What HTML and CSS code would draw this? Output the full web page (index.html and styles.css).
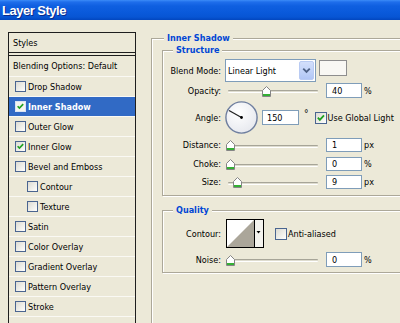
FILE: index.html
```html
<!DOCTYPE html>
<html>
<head>
<meta charset="utf-8">
<title>Layer Style</title>
<link rel="stylesheet" href="styles.css">
</head>
<body>
<div class="window">
  <div class="titlebar"><span class="title">Layer Style</span></div>
  <div class="content">
    <div class="list">
      <div class="row head">Styles</div>
      <div class="row blend">Blending Options: Default</div>
      <div class="row"><span class="cb"></span>Drop Shadow</div>
      <div class="row sel"><span class="cb"><svg viewBox="0 0 11 11" width="9" height="9"><path d="M2 5.2 L4.2 7.5 L8.8 2.6" fill="none" stroke="#21A121" stroke-width="2"/></svg></span>Inner Shadow</div>
      <div class="row"><span class="cb"></span>Outer Glow</div>
      <div class="row"><span class="cb"><svg viewBox="0 0 11 11" width="9" height="9"><path d="M2 5.2 L4.2 7.5 L8.8 2.6" fill="none" stroke="#21A121" stroke-width="2"/></svg></span>Inner Glow</div>
      <div class="row"><span class="cb"></span>Bevel and Emboss</div>
      <div class="row sub"><span class="cb"></span>Contour</div>
      <div class="row sub"><span class="cb"></span>Texture</div>
      <div class="row"><span class="cb"></span>Satin</div>
      <div class="row"><span class="cb"></span>Color Overlay</div>
      <div class="row"><span class="cb"></span>Gradient Overlay</div>
      <div class="row"><span class="cb"></span>Pattern Overlay</div>
      <div class="row"><span class="cb"></span>Stroke</div>
      <div class="row empty"></div>
    </div>

    <div class="main">
      <div class="group outer">
        <div class="legend">Inner Shadow</div>
        <div class="group structure">
          <div class="legend">Structure</div>

          <div class="frow r-blend">
            <span class="lbl">Blend Mode:</span>
            <div class="select">
              <span class="sel-text">Linear Light</span>
              <span class="sel-btn"><svg viewBox="0 0 14 17" width="14" height="17"><path d="M3.5 6.5 L7 10 L10.5 6.5" fill="none" stroke="#4D6185" stroke-width="2"/></svg></span>
            </div>
            <span class="swatch"></span>
          </div>

          <div class="frow r-opacity">
            <span class="lbl">Opacity:</span>
            <div class="slider"><span class="track"></span><span class="thumb" style="left:37px"><svg viewBox="0 0 9 11" width="9" height="11"><path d="M0.5 4.5 L4.5 0.5 L8.5 4.5 L8.5 10.5 L0.5 10.5 Z" fill="#fff" stroke="#858585"/><rect x="1" y="8" width="7" height="2" fill="#34B034"/></svg></span></div>
            <span class="num">40</span><span class="unit">%</span>
          </div>

          <div class="frow r-angle">
            <span class="lbl">Angle:</span>
            <svg class="dial" viewBox="0 0 33 33" width="33" height="33">
              <defs><radialGradient id="dg" cx="0.4" cy="0.35" r="0.7"><stop offset="0" stop-color="#ffffff"/><stop offset="1" stop-color="#E6E8EE"/></radialGradient></defs>
              <circle cx="16.5" cy="16.5" r="15.6" fill="url(#dg)" stroke="#6F7F9F" stroke-width="1.4"/>
              <line x1="16.5" y1="16.5" x2="4" y2="9.5" stroke="#222" stroke-width="1.3"/>
              <circle cx="16.5" cy="16.5" r="1.4" fill="#000"/>
            </svg>
            <span class="num angle">150</span>
            <span class="deg">°</span>
            <span class="cb big"><svg viewBox="0 0 11 11" width="10" height="10"><path d="M2 5.2 L4.2 7.5 L8.8 2.6" fill="none" stroke="#21A121" stroke-width="2"/></svg></span>
            <span class="cbl">Use Global Light</span>
          </div>

          <div class="frow r-distance">
            <span class="lbl">Distance:</span>
            <div class="slider"><span class="track"></span><span class="thumb" style="left:1px"><svg viewBox="0 0 9 11" width="9" height="11"><path d="M0.5 4.5 L4.5 0.5 L8.5 4.5 L8.5 10.5 L0.5 10.5 Z" fill="#fff" stroke="#858585"/><rect x="1" y="8" width="7" height="2" fill="#34B034"/></svg></span></div>
            <span class="num">1</span><span class="unit">px</span>
          </div>

          <div class="frow r-choke">
            <span class="lbl">Choke:</span>
            <div class="slider"><span class="track"></span><span class="thumb" style="left:1px"><svg viewBox="0 0 9 11" width="9" height="11"><path d="M0.5 4.5 L4.5 0.5 L8.5 4.5 L8.5 10.5 L0.5 10.5 Z" fill="#fff" stroke="#858585"/><rect x="1" y="8" width="7" height="2" fill="#34B034"/></svg></span></div>
            <span class="num">0</span><span class="unit">%</span>
          </div>

          <div class="frow r-size">
            <span class="lbl">Size:</span>
            <div class="slider"><span class="track"></span><span class="thumb" style="left:8px"><svg viewBox="0 0 9 11" width="9" height="11"><path d="M0.5 4.5 L4.5 0.5 L8.5 4.5 L8.5 10.5 L0.5 10.5 Z" fill="#fff" stroke="#858585"/><rect x="1" y="8" width="7" height="2" fill="#34B034"/></svg></span></div>
            <span class="num">9</span><span class="unit">px</span>
          </div>
        </div>

        <div class="group quality">
          <div class="legend">Quality</div>
          <div class="frow r-contour">
            <span class="lbl">Contour:</span>
            <svg class="contour" viewBox="0 0 38 29" width="38" height="29">
              <rect x="0.5" y="0.5" width="37" height="28" fill="#fff" stroke="#000"/>
              <polygon points="1,28 28,1 28,28" fill="#ABA69A"/>
              <rect x="28" y="1" width="9" height="27" fill="#F4F3EE"/>
              <line x1="28.5" y1="1" x2="28.5" y2="28" stroke="#000"/>
              <polygon points="30.5,12 34.5,12 32.5,14.5" fill="#000"/>
            </svg>
            <span class="cb big aa"></span>
            <span class="cbl">Anti-aliased</span>
          </div>
          <div class="frow r-noise">
            <span class="lbl">Noise:</span>
            <div class="slider"><span class="track"></span><span class="thumb" style="left:1px"><svg viewBox="0 0 9 11" width="9" height="11"><path d="M0.5 4.5 L4.5 0.5 L8.5 4.5 L8.5 10.5 L0.5 10.5 Z" fill="#fff" stroke="#858585"/><rect x="1" y="8" width="7" height="2" fill="#34B034"/></svg></span></div>
            <span class="num">0</span><span class="unit">%</span>
          </div>
        </div>
      </div>
    </div>
  </div>
</div>
</body>
</html>
```

FILE: styles.css
```css
html, body {
  margin: 0;
  padding: 0;
}
body {
  background: #ECE9D8;
  font-family: "DejaVu Sans Condensed", "DejaVu Sans", sans-serif;
  font-stretch: condensed;
  font-size: 9px;
  color: #000;
  overflow: hidden;
}
.window {
  width: 400px;
  height: 323px;
  overflow: hidden;
}
.titlebar {
  height: 20px;
  display: flex;
  align-items: center;
  padding-left: 2px;
  background: linear-gradient(to bottom, #3C8CF8 0%, #1F6EEB 10%, #0F5FE0 30%, #0A5ADB 60%, #0755D4 85%, #0246BE 100%);
}
.title {
  color: #fff;
  font-family: "Liberation Sans", sans-serif;
  font-stretch: normal;
  font-weight: bold;
  font-size: 13px;
  letter-spacing: -0.5px;
  text-shadow: 1px 1px 0 #0A2A8A;
}
.content {
  display: flex;
  align-items: flex-start;
  width: 460px;
  padding: 12px 0 0 8px;
}

/* style list */
.list {
  flex: none;
  width: 126px;
  border: 1px solid #1E1E1E;
}
.row {
  height: 19px;
  border-bottom: 1px solid #FAF9F4;
  display: flex;
  align-items: center;
  gap: 2px;
  padding-left: 6px;
  white-space: nowrap;
}
.row.head {
  padding-left: 4px;
  border-bottom: 1px solid #1E1E1E;
  margin-bottom: 2px;
}
.row.blend {
  padding-left: 4px;
  height: 20px;
  border-top: 1px solid #1E1E1E;
}
.row.sub {
  padding-left: 18px;
}
.row.sel {
  background: #316AC5;
  color: #fff;
  font-weight: bold;
}
.row.empty {
  height: 30px;
  border-bottom: 0;
}
.cb {
  flex: none;
  width: 11px;
  height: 11px;
  box-sizing: border-box;
  border: 1px solid #4A6590;
  background: linear-gradient(135deg, #DCDBD3 0%, #F4F4F0 70%, #FFFFFF 100%);
  display: flex;
  align-items: center;
  justify-content: center;
}
.row.sel .cb {
  border-color: #D8E2F4;
  background: #F4F4F0;
}
.cb.big {
  width: 12px;
  height: 12px;
}

/* right side */
.main {
  flex: none;
  width: 300px;
  margin-left: 15px;
  margin-top: 6px;
}
.group {
  border: 1px solid #ACA899;
  box-shadow: inset 1px 1px 0 #fff, 1px 1px 0 #fff;
}
.legend {
  width: max-content;
  margin-top: -6px;
  padding: 0 3px;
  height: 11px;
  line-height: 11px;
  background: #ECE9D8;
  color: #0046D5;
  font-weight: bold;
}
.outer {
  padding-left: 10px;
  height: 320px;
  border-right: 0;
}
.outer > .legend {
  margin-left: 2px;
}
.structure {
  margin-top: 6px;
  padding-bottom: 6px;
}
.structure > .legend,
.quality > .legend {
  margin-left: 10px;
}
.quality {
  margin-top: 14px;
  padding-bottom: 5px;
}
.frow {
  display: flex;
  align-items: center;
  white-space: nowrap;
}
.lbl {
  flex: none;
  width: 58px;
  margin-right: 4px;
  text-align: right;
}
.r-blend { margin-top: 3px; height: 23px; }
.r-opacity { margin-top: 1px; height: 15px; }
.r-angle { margin-top: 3px; height: 33px; }
.r-distance { margin-top: 4px; height: 14px; }
.r-choke { margin-top: 5px; height: 14px; }
.r-size { margin-top: 4px; height: 14px; }
.r-contour { margin-top: 3px; height: 29px; }
.r-noise { margin-top: 4px; height: 15px; }

.select {
  flex: none;
  box-sizing: border-box;
  width: 91px;
  height: 23px;
  border: 1px solid #7F9DB9;
  background: #fff;
  display: flex;
  align-items: center;
  justify-content: space-between;
  padding: 1px;
}
.sel-text {
  padding-left: 1px;
}
.sel-btn {
  width: 15px;
  height: 19px;
  box-sizing: border-box;
  border: 1px solid #B9CBF3;
  border-radius: 2px;
  background: linear-gradient(to bottom, #D3DFFB 0%, #BFD1F8 60%, #B1C6F5 100%);
  display: flex;
  align-items: center;
  justify-content: center;
}
.swatch {
  flex: none;
  align-self: flex-start;
  margin-top: 1px;
  margin-left: 3px;
  width: 28px;
  height: 16px;
  box-sizing: border-box;
  border: 1px solid #8E8E8E;
  background: #F9F8F4;
}
.slider {
  flex: none;
  position: relative;
  width: 101px;
  align-self: stretch;
  display: flex;
  align-items: center;
}
.track {
  display: block;
  margin-left: 3px;
  margin-top: 2px;
  width: 90px;
  height: 3px;
  box-sizing: border-box;
  border-top: 1px solid #A7A598;
  border-bottom: 1px solid #fff;
  background: #DEDCCF;
  border-radius: 1px;
}
.thumb {
  position: absolute;
  top: 50%;
  margin-top: -5px;
  width: 9px;
  height: 11px;
  display: block;
}
.thumb svg { display: block; }
.num {
  flex: none;
  box-sizing: border-box;
  width: 36px;
  height: 14px;
  border: 1px solid #7F9DB9;
  background: #fff;
  padding-left: 5px;
  display: flex;
  align-items: center;
}
.r-opacity .num, .r-noise .num { height: 15px; }
.unit {
  margin-left: 2px;
}
.dial {
  flex: none;
  display: block;
}
.num.angle {
  width: 37px;
  height: 15px;
  margin-left: 4px;
  padding-left: 4px;
}
.deg {
  align-self: flex-start;
  margin-top: 8px;
  margin-left: 5px;
  font-size: 10px;
  line-height: 10px;
}
.r-angle .cb {
  margin-left: 6px;
}
.cbl {
  margin-left: 1px;
}
.contour {
  flex: none;
  display: block;
  margin-left: 1px;
}
.cb.aa {
  margin-left: 11px;
}
```
